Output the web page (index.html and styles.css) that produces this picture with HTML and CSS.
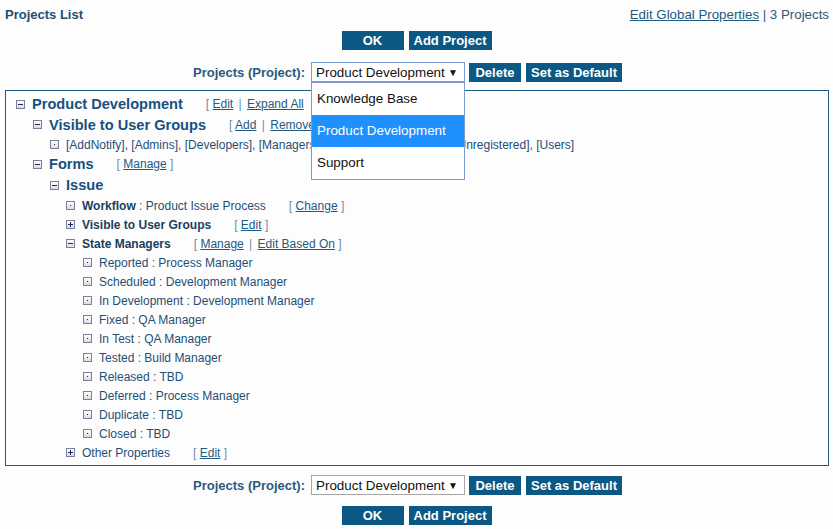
FILE: index.html
```html
<!DOCTYPE html>
<html>
<head>
<meta charset="utf-8">
<title>Projects List</title>
<link rel="stylesheet" href="styles.css">
</head>
<body>
<div class="page">
  <div class="header">
    <span class="title">Projects List</span>
    <span class="meta"><a href="#">Edit Global Properties</a> | 3 Projects</span>
  </div>

  <div class="btnrow top">
    <button class="btn ok">OK</button>
    <button class="btn add">Add Project</button>
  </div>

  <div class="selrow top">
    <span class="sellabel">Projects (Project):</span>
    <div class="selwrap">
      <div class="select focused"><span class="seltext">Product Development</span><span class="arrow">▼</span></div>
      <div class="dropdown">
        <div class="opt">Knowledge Base</div>
        <div class="opt active">Product Development</div>
        <div class="opt">Support</div>
      </div>
    </div>
    <button class="btn del">Delete</button>
    <button class="btn def">Set as Default</button>
  </div>

  <div class="tree">
    <div class="row r0 l0"><span class="ic minus"></span><span class="head">Product Development</span><span class="acts"><span class="br">[</span> <a href="#">Edit</a> <span class="sep">|</span> <a href="#">Expand All</a></span></div>
    <div class="row r1 l1"><span class="ic minus"></span><span class="head">Visible to User Groups</span><span class="acts"><span class="br">[</span> <a href="#">Add</a> <span class="sep">|</span> <a href="#">Remove</a></span></div>
    <div class="row l2"><span class="ic leaf"></span><span class="txt">[AddNotify], [Admins], [Developers], [Managers], [Supervisors], [Testers], [Unregistered], [Users]</span></div>
    <div class="row r2 l1"><span class="ic minus"></span><span class="head">Forms</span><span class="acts"><span class="br">[</span> <a href="#">Manage</a> <span class="br">]</span></span></div>
    <div class="row r3 l2"><span class="ic minus"></span><span class="head">Issue</span></div>
    <div class="row l3"><span class="ic leaf"></span><span class="txt"><b>Workflow</b> : Product Issue Process</span><span class="acts"><span class="br">[</span> <a href="#">Change</a> <span class="br">]</span></span></div>
    <div class="row l3"><span class="ic plus"></span><span class="txt"><b>Visible to User Groups</b></span><span class="acts"><span class="br">[</span> <a href="#">Edit</a> <span class="br">]</span></span></div>
    <div class="row l3"><span class="ic minus"></span><span class="txt"><b>State Managers</b></span><span class="acts"><span class="br">[</span> <a href="#">Manage</a> <span class="sep">|</span> <a href="#">Edit Based On</a> <span class="br">]</span></span></div>
    <div class="row l4"><span class="ic leaf"></span><span class="txt">Reported : Process Manager</span></div>
    <div class="row l4"><span class="ic leaf"></span><span class="txt">Scheduled : Development Manager</span></div>
    <div class="row l4"><span class="ic leaf"></span><span class="txt">In Development : Development Manager</span></div>
    <div class="row l4"><span class="ic leaf"></span><span class="txt">Fixed : QA Manager</span></div>
    <div class="row l4"><span class="ic leaf"></span><span class="txt">In Test : QA Manager</span></div>
    <div class="row l4"><span class="ic leaf"></span><span class="txt">Tested : Build Manager</span></div>
    <div class="row l4"><span class="ic leaf"></span><span class="txt">Released : TBD</span></div>
    <div class="row l4"><span class="ic leaf"></span><span class="txt">Deferred : Process Manager</span></div>
    <div class="row l4"><span class="ic leaf"></span><span class="txt">Duplicate : TBD</span></div>
    <div class="row l4"><span class="ic leaf"></span><span class="txt">Closed : TBD</span></div>
    <div class="row l3"><span class="ic plus"></span><span class="txt">Other Properties</span><span class="acts"><span class="br">[</span> <a href="#">Edit</a> <span class="br">]</span></span></div>
  </div>

  <div class="selrow bottom">
    <span class="sellabel">Projects (Project):</span>
    <div class="selwrap">
      <div class="select"><span class="seltext">Product Development</span><span class="arrow">▼</span></div>
    </div>
    <button class="btn del">Delete</button>
    <button class="btn def">Set as Default</button>
  </div>

  <div class="btnrow bottom">
    <button class="btn ok">OK</button>
    <button class="btn add">Add Project</button>
  </div>
</div>
</body>
</html>
```

FILE: styles.css
```css
html, body {
  margin: 0;
  padding: 0;
  background: #fdfdfd;
}
body {
  font-family: "Liberation Sans", Arial, sans-serif;
  color: #1d4f75;
}
.page {
  width: 833px;
}
.header {
  display: flex;
  justify-content: space-between;
  align-items: center;
  height: 28px;
  padding: 0 4px 0 5px;
}
.title {
  font-weight: bold;
  font-size: 13px;
  color: #1f4e70;
}
.meta {
  font-size: 13.3px;
  color: #2f5878;
}
.meta a {
  color: #1e5a82;
  text-decoration: underline;
}
.btnrow {
  display: flex;
  justify-content: center;
  gap: 5px;
  height: 19px;
}
.btnrow.top { margin-top: 3px; }
.btnrow.bottom { margin-top: 11px; }
.btn {
  font-family: "Liberation Sans", Arial, sans-serif;
  font-weight: bold;
  font-size: 13px;
  color: #fff;
  background: #0a5883;
  border: none;
  margin: 0;
  padding: 0;
  height: 19px;
  line-height: 19px;
  cursor: pointer;
}
.btn.ok { width: 62px; }
.btn.add { width: 83px; }
.btn.del { width: 52px; }
.btn.def { width: 96px; }
.selrow {
  display: flex;
  justify-content: center;
  align-items: center;
  height: 20px;
  padding-right: 18px;
}
.selrow.top { margin-top: 12px; }
.selrow.bottom { margin-top: 9px; }
.sellabel {
  font-weight: bold;
  font-size: 13px;
  color: #2a5a7e;
  margin-right: 6px;
}
.selwrap {
  position: relative;
  margin-right: 4px;
}
.select {
  box-sizing: border-box;
  width: 154px;
  height: 20px;
  border: 1px solid #a6a6a6;
  background: #fff;
  display: flex;
  align-items: center;
  justify-content: space-between;
  padding: 0 6px 0 4px;
  font-size: 13.4px;
  color: #111;
  white-space: nowrap;
  overflow: hidden;
}
.seltext {
  white-space: nowrap;
}
.select.focused {
  border-color: #7a9bd0;
}
.arrow {
  font-size: 10px;
  color: #111;
  flex: none;
}
.del { margin-right: 5px; }
.dropdown {
  position: absolute;
  top: 20px;
  left: 0;
  width: 154px;
  box-sizing: border-box;
  border: 1px solid #7a9bd0;
  background: #fff;
  z-index: 5;
}
.opt {
  height: 32px;
  line-height: 32px;
  padding-left: 5px;
  font-size: 13.4px;
  color: #111;
  white-space: nowrap;
}
.opt.active {
  background: #1e90ff;
  color: #fff;
}
.tree {
  margin: 8px 4px 0 5px;
  border: 1px solid #1b5b84;
  padding: 3px 0 2px 0;
  height: 369px;
}
.row {
  display: flex;
  align-items: center;
  height: 19px;
  font-size: 12px;
  white-space: nowrap;
}
.row.r0 { height: 20px; }
.row.r1 { height: 21px; }
.row.r2 { height: 20px; }
.row.r3 { height: 22px; }
.l0 { padding-left: 10px; }
.l1 { padding-left: 27px; }
.l2 { padding-left: 44px; }
.l3 { padding-left: 60px; }
.l4 { padding-left: 77px; }
.ic {
  position: relative;
  box-sizing: border-box;
  width: 9px;
  height: 9px;
  border: 1px solid #7a8099;
  background: linear-gradient(#ffffff, #d8dce6);
  margin-right: 7px;
  flex: none;
}
.ic.minus::before,
.ic.plus::before {
  content: "";
  position: absolute;
  left: 1px;
  top: 3px;
  width: 5px;
  height: 1px;
  background: #22284f;
}
.ic.plus::after {
  content: "";
  position: absolute;
  left: 3px;
  top: 1px;
  width: 1px;
  height: 5px;
  background: #22284f;
}
.ic.leaf::before {
  content: "";
  position: absolute;
  left: 3px;
  top: 3px;
  width: 1px;
  height: 1px;
  background: #22284f;
}
.head {
  font-weight: bold;
  font-size: 14.6px;
  color: #15527f;
}
.txt {
  color: #1d4f75;
}
.txt b {
  color: #1a3f5e;
}
.acts {
  margin-left: 23px;
  font-size: 12px;
  color: #6d8fab;
}
.acts a {
  color: #1e5a82;
  text-decoration: underline;
}
.sep {
  color: #6d8fab;
  margin: 0 2px;
}
.br {
  color: #6d8fab;
}
```
